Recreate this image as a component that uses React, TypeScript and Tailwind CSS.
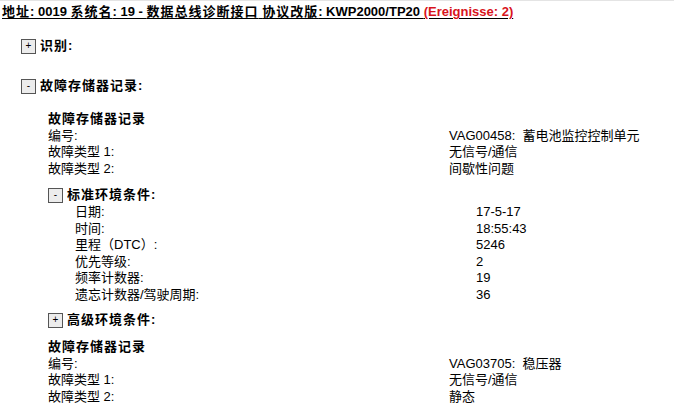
const font = { fontFamily: '"Liberation Sans", Arial, "Noto Sans CJK SC", sans-serif' };

// bold CJK in the original is a synthetic bold, one pixel wider per glyph
function Bold({ text }: { text: string }) {
  const parts = text.split(/([\u3000-\u9fff\uff00-\uffef]+)/);
  return (
    <>
      {parts.map((p, i) =>
        /[\u3000-\u9fff\uff00-\uffef]/.test(p) ? (
          <span key={i} className="tracking-[1px]">
            {p}
          </span>
        ) : (
          <span key={i}>{p}</span>
        )
      )}
    </>
  );
}

function Toggle({ open, label }: { open: boolean; label: string }) {
  return (
    <div className="flex items-center h-4 leading-4">
      <span className="flex items-center justify-center w-[15px] h-[15px] border border-[#555] bg-[#ececec] text-[10px] leading-none text-black">
        {open ? '-' : '+'}
      </span>
      <span className="ml-[4px] font-bold text-[13px]">
        <Bold text={label} />
      </span>
    </div>
  );
}

function Row({ label, value }: { label: string; value: string }) {
  return (
    <div className="grid grid-cols-[401px_1fr] leading-[16.5px]">
      <span>{label}</span>
      <span className="whitespace-pre">{value}</span>
    </div>
  );
}

function Record({ code, type1, type2 }: { code: string; type1: string; type2: string }) {
  return (
    <div className="ml-[48px]">
      <div className="font-bold leading-[16.5px]">
        <Bold text="故障存储器记录" />
      </div>
      <Row label="编号:" value={code} />
      <Row label="故障类型 1:" value={type1} />
      <Row label="故障类型 2:" value={type2} />
    </div>
  );
}

export default function App() {
  const env = [
    ['日期:', '17-5-17'],
    ['时间:', '18:55:43'],
    ['里程（DTC）:', '5246'],
    ['优先等级:', '2'],
    ['频率计数器:', '19'],
    ['遗忘计数器/驾驶周期:', '36'],
  ];

  return (
    <div style={font} className="w-[674px] h-[410px] overflow-hidden bg-white text-[13px] text-black border-t border-[#e4e4e4]">
      <div className="pt-[2px] pl-[2px] font-bold leading-[17px] underline underline-offset-2">
        <Bold text="地址: 0019 系统名: 19 - 数据总线诊断接口 协议改版: KWP2000/TP20" />{' '}
        <span className="text-[#d8141c]">(Ereignisse: 2)</span>
      </div>

      <div className="ml-[21px] mt-[18px]">
        <Toggle open={false} label="识别:" />
      </div>

      <div className="ml-[21px] mt-[24px]">
        <Toggle open={true} label="故障存储器记录:" />
      </div>

      <div className="mt-[17px]">
        <Record code="VAG00458:  蓄电池监控控制单元" type1="无信号/通信" type2="间歇性问题" />
      </div>

      <div className="ml-[48px] mt-[10px]">
        <Toggle open={true} label="标准环境条件:" />
      </div>
      <div className="ml-[75px] mt-[1px]">
        {env.map(([l, v]) => (
          <Row key={l} label={l} value={v} />
        ))}
      </div>

      <div className="ml-[48px] mt-[9px]">
        <Toggle open={false} label="高级环境条件:" />
      </div>

      <div className="mt-[11px]">
        <Record code="VAG03705:  稳压器" type1="无信号/通信" type2="静态" />
      </div>
    </div>
  );
}
